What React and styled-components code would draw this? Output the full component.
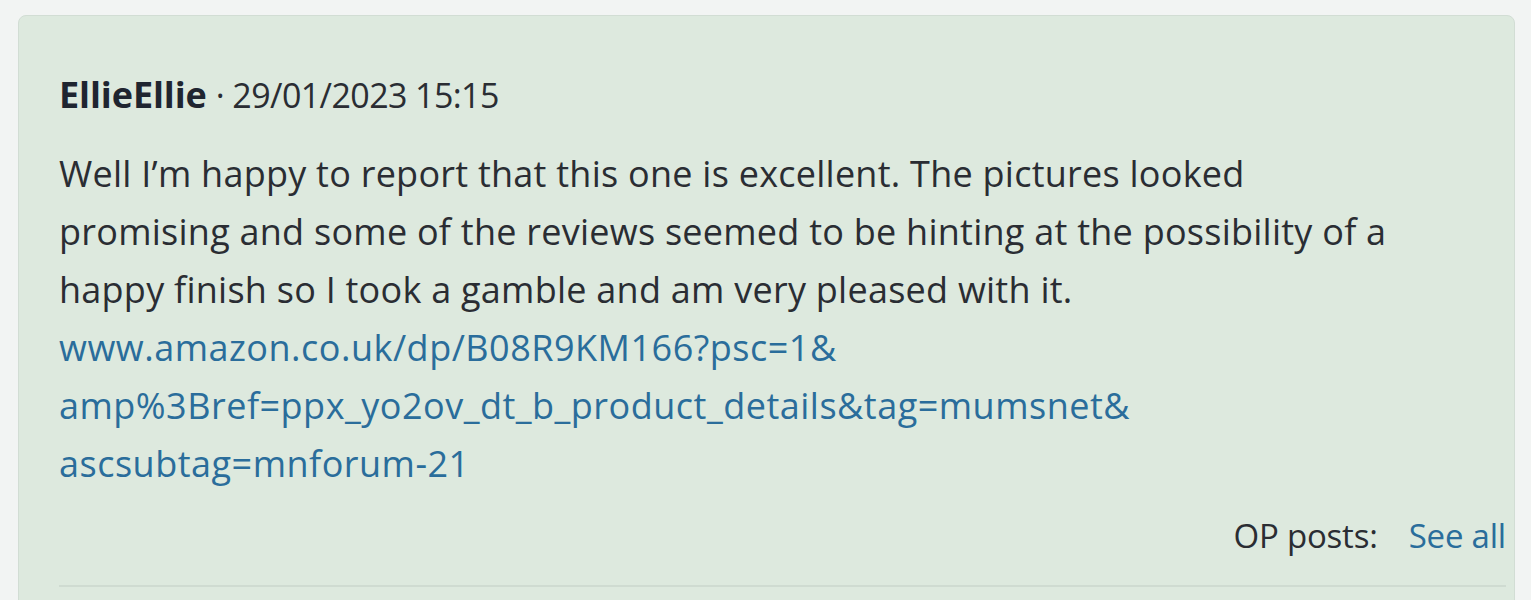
import React from "react";
import styled, { createGlobalStyle } from "styled-components";

const Global = createGlobalStyle`
  html, body { margin: 0; padding: 0; background: #f2f4f3; }
  body { font-family: "Open Sans", "Noto Sans", sans-serif; color: #2a2d33; }
`;

const Page = styled.div`
  padding: 15px 0 0 18px;
  height: 600px;
  box-sizing: border-box;
  overflow: hidden;
`;

const Card = styled.article`
  width: 1497px;
  min-height: 640px;
  box-sizing: border-box;
  background: #dde9de;
  border: 1px solid #d2ddd4;
  border-radius: 8px;
  padding: 50px 8px 0 40px;
  font-size: 36px;
  line-height: 58px;
  letter-spacing: 0.25px;
`;

const Header = styled.div`
  display: flex;
  align-items: baseline;
  gap: 9px;
`;

const Author = styled.span`
  font-weight: 700;
  color: #1f2530;
  letter-spacing: -0.1px;
`;

const Meta = styled.span`
  color: #2a2d33;
  font-size: 34px;
  letter-spacing: -0.6px;
`;

const Body = styled.p`
  margin: 21px 0 0;
  max-width: 1337px;
`;

const Link = styled.a`
  color: #2a6d9b;
  text-decoration: none;
  letter-spacing: ${(p) => (p.$wide ? "0.5px" : "inherit")};
`;

const Footer = styled.div`
  display: flex;
  justify-content: flex-end;
  align-items: baseline;
  gap: 31px;
  margin-top: 14px;
  padding-bottom: 20px;
  border-bottom: 2px solid #cfdbd1;
  font-size: 33px;
  letter-spacing: -0.2px;
`;

const FooterLabel = styled.span`
  color: #2a2d33;
`;

export default function App() {
  return (
    <>
      <Global />
      <Page>
        <Card>
          <Header>
            <Author>EllieEllie</Author>
            <Meta>· 29/01/2023 15:15</Meta>
          </Header>
          <Body>
            Well I’m happy to report that this one is excellent. The pictures looked promising and some of the reviews seemed to be hinting at the possibility of a happy finish so I took a gamble and am very pleased with it.
            <br />
            <Link href="#" $wide>
              www.amazon.co.uk/dp/B08R9KM166?psc=1&amp;
              <br />
              amp%3Bref=ppx_yo2ov_dt_b_product_details&amp;tag=mumsnet&amp;
              <br />
              ascsubtag=mnforum-21
            </Link>
          </Body>
          <Footer>
            <FooterLabel>OP posts:</FooterLabel>
            <Link href="#">See all</Link>
          </Footer>
        </Card>
      </Page>
    </>
  );
}
